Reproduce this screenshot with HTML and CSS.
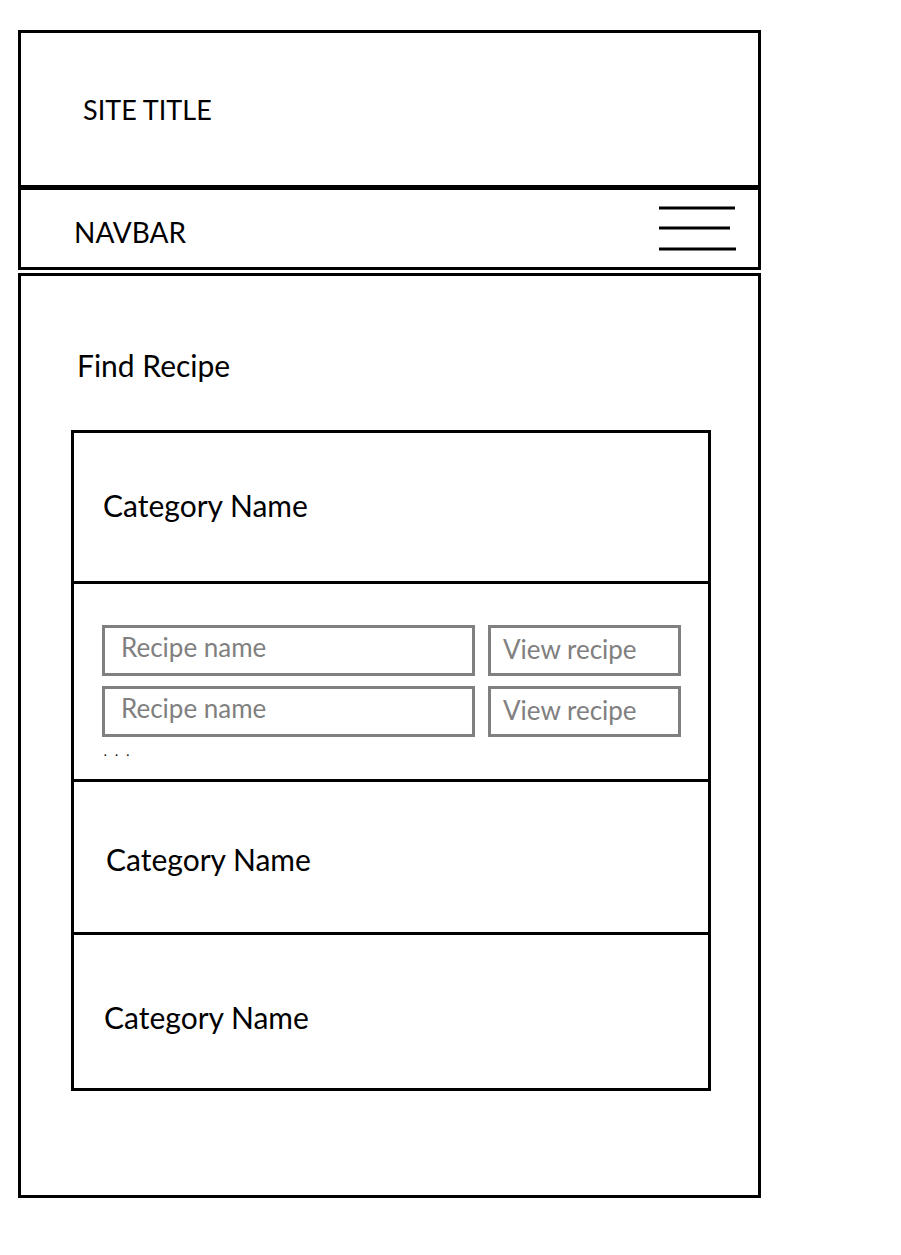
FILE: index.html
```html
<!DOCTYPE html>
<html lang="en">
<head>
	<meta charset="UTF-8">
	<meta name="viewport" content="width=device-width, initial-scale=1.0">
	<title>Find Recipe</title>
	<link rel="stylesheet" href="styles.css">
</head>
<body>

	<div class="page">
		<!-- site title -->
		<header class="site-title">SITE TITLE</header>

		<!-- navbar with menu button -->
		<nav class="navbar">
			<span class="nav-label">NAVBAR</span>
			<svg class="menu-icon" width="78" height="46" viewBox="0 0 78 46">
				<line x1="0" y1="2" x2="76" y2="2" />
				<line x1="0" y1="22" x2="71" y2="22" />
				<line x1="0" y1="43" x2="77" y2="43" />
			</svg>
		</nav>

		<main class="content">
			<h1 class="find-title">Find Recipe</h1>

			<div class="categories">
				<div class="category first">
					<div class="category-name">Category Name</div>
				</div>

				<div class="category open">
					<div class="recipe-row">
						<div class="recipe-name">Recipe name</div>
						<div class="recipe-view">View recipe</div>
					</div>
					<div class="recipe-row">
						<div class="recipe-name">Recipe name</div>
						<div class="recipe-view">View recipe</div>
					</div>
					<div class="more">. . .</div>
				</div>

				<div class="category third">
					<div class="category-name">Category Name</div>
				</div>

				<div class="category last">
					<div class="category-name">Category Name</div>
				</div>
			</div>
		</main>
	</div>

</body>
</html>
```

FILE: styles.css
```css
* {
	box-sizing: border-box;
}

body {
	margin: 0;
	background: white;
	font-family: "Lato", "Open Sans", sans-serif;
	color: black;
}

.page {
	width: 743px;
	margin-left: 18px;
	padding-top: 30px;
}

.site-title {
	height: 158px;
	border: 3px solid black;
	display: flex;
	align-items: center;
	padding-left: 62px;
	font-size: 27px;
}

.navbar {
	height: 83px;
	margin-top: -1px;
	border: 3px solid black;
	display: flex;
	justify-content: space-between;
	align-items: center;
	padding: 0 21px 0 53px;
	font-size: 28px;
}

.nav-label {
	padding-top: 6px;
}

.menu-icon line {
	stroke: black;
	stroke-width: 3;
}

.content {
	height: 925px;
	margin-top: 3px;
	border: 3px solid black;
	padding-top: 72px;
}

.find-title {
	margin: 0 0 48px 56px;
	font-size: 30px;
	font-weight: normal;
	line-height: 34px;
}

.categories {
	width: 640px;
	margin-left: 50px;
	border: 3px solid black;
}

.category {
	height: 148px;
	display: flex;
	align-items: center;
	padding-left: 29px;
}

.category + .category {
	border-top: 3px solid black;
}

.category-name {
	font-size: 30px;
}

.first {
	padding-bottom: 5px;
}

.third {
	height: 153px;
	padding-left: 32px;
	padding-top: 4px;
}

.last {
	height: 156px;
	padding-left: 30px;
	padding-top: 10px;
}

/* expanded category with recipes */
.open {
	height: 198px;
	display: block;
	padding: 41px 0 0 28px;
}

.recipe-row {
	display: flex;
	gap: 13px;
	margin-bottom: 10px;
}

.recipe-name,
.recipe-view {
	height: 51px;
	border: 3px solid #808080;
	color: #808080;
	font-size: 26px;
	line-height: 38px;
}

.recipe-view {
	line-height: 42px;
}

.recipe-name {
	width: 373px;
	padding-left: 16px;
}

.recipe-view {
	width: 193px;
	padding-left: 12px;
}

.more {
	font-size: 11px;
	font-weight: bold;
	line-height: 10px;
	letter-spacing: 3px;
	padding-left: 2px;
	margin-top: 6px;
}
```
